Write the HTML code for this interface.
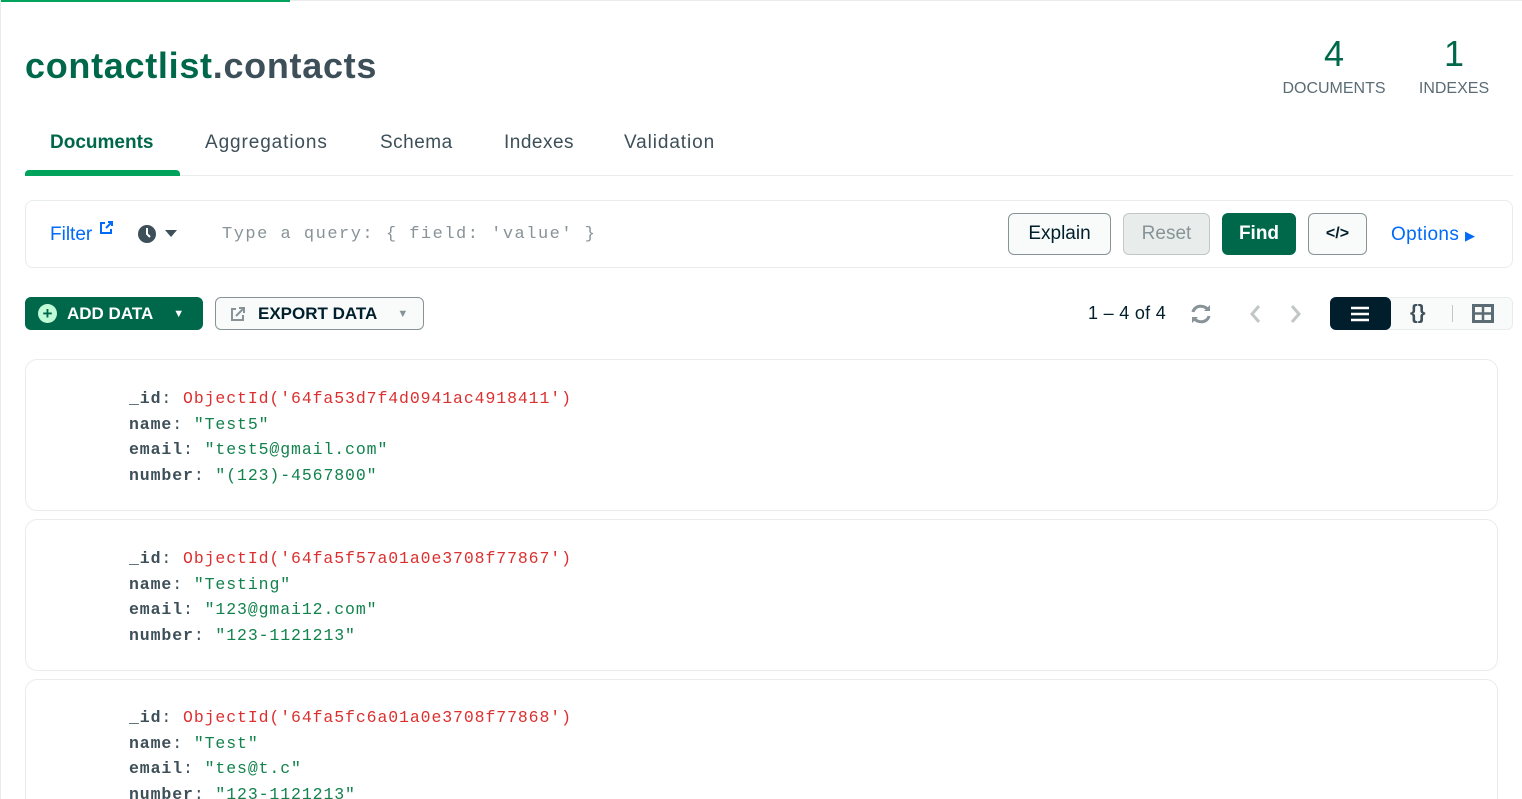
<!DOCTYPE html>
<html style="width:1522px;height:799px;overflow:hidden"><head><meta charset="utf-8"><style>
*{box-sizing:border-box;margin:0;padding:0}
body{width:1522px;height:799px;overflow:hidden;background:#fff;font-family:"Liberation Sans",sans-serif;position:relative}
.a{position:absolute}
.btn{position:absolute;border:1px solid #889397;border-radius:6px;background:#f9fbfa;font-size:19px;display:flex;align-items:center;justify-content:center;color:#001e2b}
.doc{position:absolute;left:25px;width:1473px;border:1px solid #e8edeb;border-radius:12px;background:#fff}
.doc pre{position:absolute;left:103px;top:26px;font-family:"Liberation Mono",monospace;font-size:16.5px;letter-spacing:0.9px;line-height:25.5px;color:#3d4f58}
.k{font-weight:bold;color:#3d4f58}.r{color:#db3030}.g{color:#12824d}
.tab{position:absolute;top:132px;font-size:19px;letter-spacing:0.5px;color:#3d4f58}
</style></head><body>
<div class="a" style="left:0;top:0;width:290px;height:2px;background:#00a35c"></div>
<div class="a" style="left:290px;top:0;width:1232px;height:1px;background:#e8edeb"></div>
<div class="a" style="left:0;top:0;width:1px;height:799px;background:#e8edeb"></div>
<div class="a" style="left:25px;top:45px;font-size:36px;font-weight:bold;letter-spacing:0.7px"><span style="color:#00684a">contactlist</span><span style="color:#3d4f58">.contacts</span></div>
<div class="a" style="left:1280px;top:33px;width:108px;text-align:center;color:#00684a;font-size:36px">4</div>
<div class="a" style="left:1276px;top:80px;width:116px;text-align:center;color:#5c6c75;font-size:16px">DOCUMENTS</div>
<div class="a" style="left:1414px;top:33px;width:80px;text-align:center;color:#00684a;font-size:36px">1</div>
<div class="a" style="left:1414px;top:80px;width:80px;text-align:center;color:#5c6c75;font-size:16px">INDEXES</div>
<div class="tab" style="left:50px;color:#00684a;font-weight:bold;letter-spacing:0">Documents</div>
<div class="tab" style="left:205px;letter-spacing:0.9px">Aggregations</div>
<div class="tab" style="left:380px">Schema</div>
<div class="tab" style="left:504px">Indexes</div>
<div class="tab" style="left:624px;letter-spacing:0.9px">Validation</div>
<div class="a" style="left:25px;top:175px;width:1488px;height:1px;background:#e8edeb"></div>
<div class="a" style="left:25px;top:170px;width:155px;height:6px;background:#00a35c;border-radius:4px 4px 0 0"></div>

<div class="a" style="left:25px;top:200px;width:1488px;height:68px;border:1px solid #e8edeb;border-radius:8px"></div>
<div class="a" style="left:50px;top:224px;font-size:19px;color:#016bf8">Filter</div>
<svg class="a" style="left:99px;top:221px" width="14" height="14"><path d="M6 2H2v10h10V8" stroke="#016bf8" stroke-width="2" fill="none"/><path d="M7 7l6-6M9 1h4v4" stroke="#016bf8" stroke-width="2" fill="none"/></svg>
<svg class="a" style="left:137px;top:224px" width="44" height="20"><circle cx="10" cy="10" r="9" fill="#3d4f58"/><path d="M10 4v6l3 3" stroke="#fff" stroke-width="2" fill="none"/><path d="M28 6h12l-6 7z" fill="#3d4f58"/></svg>
<div class="a" style="left:222px;top:225px;font-family:'Liberation Mono',monospace;font-size:17px;letter-spacing:1.5px;color:#889397">Type a query: { field: 'value' }</div>
<div class="btn" style="left:1008px;top:213px;width:103px;height:42px">Explain</div>
<div class="btn" style="left:1123px;top:213px;width:87px;height:42px;background:#e8edeb;border-color:#c1c7c6;color:#889397">Reset</div>
<div class="btn" style="left:1222px;top:213px;width:74px;height:42px;background:#00684a;border-color:#00684a;color:#fff;font-weight:bold">Find</div>
<div class="btn" style="left:1308px;top:213px;width:59px;height:42px;font-weight:bold;font-size:16px">&lt;/&gt;</div>
<div class="a" style="left:1391px;top:224px;font-size:19px;letter-spacing:0.4px;color:#016bf8">Options <span style="font-size:13px">&#9654;</span></div>

<div class="btn" style="left:25px;top:297px;width:178px;height:33px;background:#00684a;border-color:#00684a;color:#fff;font-weight:bold;font-size:17px;justify-content:flex-start;padding-left:12px"><span style="display:inline-block;width:19px;height:19px;border-radius:50%;background:#c0fad6;color:#00684a;font-size:17px;line-height:19px;text-align:center;margin-right:10px">+</span>ADD DATA<span style="font-size:11px;margin-left:20px">&#9660;</span></div>
<div class="btn" style="left:215px;top:297px;width:209px;height:33px;font-weight:bold;font-size:17px;justify-content:flex-start;padding-left:14px"><svg width="16" height="16" style="margin-right:12px"><path d="M6 3H2v11h11V9" stroke="#889397" stroke-width="2" fill="none"/><path d="M6 10l7-7M9 2h5v5" stroke="#889397" stroke-width="2" fill="none"/></svg>EXPORT DATA<span style="font-size:11px;margin-left:20px;color:#889397">&#9660;</span></div>
<div class="a" style="left:1088px;top:303px;font-size:18px;letter-spacing:0.3px;color:#001e2b">1 – 4 of 4</div>
<svg class="a" style="left:1189px;top:303px" width="24" height="22"><path d="M4 9a8 7 0 0 1 15-2M20 13a8 7 0 0 1-15 2" stroke="#889397" stroke-width="3" fill="none"/><path d="M15 8h6V2zM9 14H3v6z" fill="#889397"/></svg>
<svg class="a" style="left:1245px;top:303px" width="60" height="22"><path d="M14 3l-7 8 7 8M47 3l7 8-7 8" stroke="#c1c7c6" stroke-width="3" fill="none"/></svg>
<div class="a" style="left:1330px;top:297px;width:183px;height:33px;border:1px solid #e8edeb;border-radius:6px;background:#f9fbfa"></div>
<div class="a" style="left:1330px;top:297px;width:61px;height:33px;background:#001e2b;border-radius:6px"></div>
<svg class="a" style="left:1350px;top:306px" width="20" height="16"><path d="M1 2h18M1 8h18M1 14h18" stroke="#fff" stroke-width="2.5"/></svg>
<div class="a" style="left:1410px;top:302px;font-size:20px;font-weight:bold;color:#3d4f58">{}</div>
<div class="a" style="left:1452px;top:305px;width:1px;height:17px;background:#c1c7c6"></div>
<svg class="a" style="left:1472px;top:304px" width="22" height="19"><rect x="1.5" y="1.5" width="19" height="16" fill="none" stroke="#5c6c75" stroke-width="3"/><path d="M11 1v17M1 9.5h20" stroke="#5c6c75" stroke-width="2.5"/></svg>

<div class="doc" style="top:359px;height:152px"><pre><span class="k">_id</span>: <span class="r">ObjectId('64fa53d7f4d0941ac4918411')</span>
<span class="k">name</span>: <span class="g">"Test5"</span>
<span class="k">email</span>: <span class="g">"test5@gmail.com"</span>
<span class="k">number</span>: <span class="g">"(123)-4567800"</span></pre></div>
<div class="doc" style="top:519px;height:152px"><pre><span class="k">_id</span>: <span class="r">ObjectId('64fa5f57a01a0e3708f77867')</span>
<span class="k">name</span>: <span class="g">"Testing"</span>
<span class="k">email</span>: <span class="g">"123@gmai12.com"</span>
<span class="k">number</span>: <span class="g">"123-1121213"</span></pre></div>
<div class="doc" style="top:679px;height:152px"><pre style="top:25px"><span class="k">_id</span>: <span class="r">ObjectId('64fa5fc6a01a0e3708f77868')</span>
<span class="k">name</span>: <span class="g">"Test"</span>
<span class="k">email</span>: <span class="g">"tes@t.c"</span>
<span class="k">number</span>: <span class="g">"123-1121213"</span></pre></div>
</body></html>
